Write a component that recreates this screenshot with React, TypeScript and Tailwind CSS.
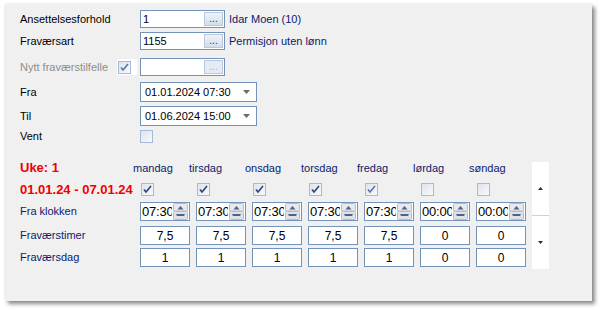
import type { ReactNode } from "react";

const font = { fontFamily: '"Liberation Sans", Arial, sans-serif' };

const days = [
  { name: "mandag", on: true, time: "07:30", hours: "7,5", day: "1" },
  { name: "tirsdag", on: true, time: "07:30", hours: "7,5", day: "1" },
  { name: "onsdag", on: true, time: "07:30", hours: "7,5", day: "1" },
  { name: "torsdag", on: true, time: "07:30", hours: "7,5", day: "1" },
  { name: "fredag", on: true, time: "07:30", hours: "7,5", day: "1" },
  { name: "lørdag", on: false, time: "00:00", hours: "0", day: "0" },
  { name: "søndag", on: false, time: "00:00", hours: "0", day: "0" },
];

function Check({ checked, dim }: { checked: boolean; dim?: boolean }) {
  return (
    <div className="flex h-[13px] w-[13px] items-center justify-center border border-[#a6bbd8] bg-gradient-to-br from-[#dfe4ec] to-[#f8f9fb]">
      {checked && (
        <svg width="9" height="9" viewBox="0 0 9 9">
          <path
            d="M1 4.5 L3 7 L8 1"
            fill="none"
            stroke={dim ? "#5a76a8" : "#2b4577"}
            strokeWidth="1.6"
          />
        </svg>
      )}
    </div>
  );
}

function LookupBox({ value, disabled }: { value: string; disabled?: boolean }) {
  return (
    <div className="flex h-[18px] w-[85px] items-stretch border border-[#7394b8] bg-white">
      <div className="flex-1 pl-[2px] leading-[16px]">{value}</div>
      <div
        className={`my-[1px] mr-[1px] flex w-[19px] items-end justify-center border border-[#b9c8da] pb-[2px] text-[10px] leading-[8px] ${
          disabled ? "bg-[#e4ebf3] text-[#a8b4c4]" : "bg-gradient-to-b from-[#eef3f9] to-[#d3deeb] text-[#333]"
        }`}
      >
        ...
      </div>
    </div>
  );
}

function DateBox({ value }: { value: string }) {
  return (
    <div className="flex h-[20px] w-[117px] items-center border border-[#7394b8] bg-white pl-[4px]">
      <span className="flex-1">{value}</span>
      <svg width="7" height="4" viewBox="0 0 7 4" className="mr-[6px]">
        <path d="M0 0 H7 L3.5 4 Z" fill="#6b6b6b" />
      </svg>
    </div>
  );
}

function Spin({ value }: { value: string }) {
  return (
    <div className="flex h-[19px] w-[50px] items-stretch border border-[#7394b8] bg-white">
      <div className="w-[31px] overflow-hidden whitespace-nowrap pl-[1px] text-[13px] leading-[17px] tracking-[-0.2px]">
        {value}
      </div>
      <svg width="15" height="17" viewBox="0 0 15 17" className="ml-auto mr-[1px]">
        <rect x="0.5" y="0.5" width="14" height="7.5" rx="1" fill="#e7e9ec" stroke="#b7bcc4" />
        <rect x="0.5" y="8.5" width="14" height="8" rx="1" fill="#dfe2e6" stroke="#b7bcc4" />
        <path d="M7.5 3 L10.5 6.5 H4.5 Z" fill="#4e6188" />
        <path d="M3 11 H12 L11 13 H4 Z" fill="#4e6188" />
      </svg>
    </div>
  );
}

function NumBox({ value }: { value: string }) {
  return (
    <div className="flex h-[19px] w-[50px] items-center justify-center border border-[#7394b8] bg-white text-[12px]">
      {value}
    </div>
  );
}

function Row({ label, children, className }: { label: ReactNode; children: ReactNode; className?: string }) {
  return (
    <div className={`flex items-center ${className ?? ""}`}>
      <div className="w-[120px] whitespace-nowrap">{label}</div>
      {children}
    </div>
  );
}

function DayRow({ label, className, render }: { label: ReactNode; className?: string; render: (d: (typeof days)[number]) => ReactNode }) {
  return (
    <div className={`flex items-center ${className ?? ""}`}>
      <div className="w-[120px] whitespace-nowrap">{label}</div>
      {days.map((d) => (
        <div key={d.name} className="w-[56px]">
          {render(d)}
        </div>
      ))}
    </div>
  );
}

export default function App() {
  return (
    <div className="h-[310px] w-[600px] overflow-hidden bg-white pl-[5px] pt-[4px] text-[11px] text-black" style={font}>
      <div className="h-[297px] w-[587px] bg-[#f0f0f0] pl-[15px] pt-[6px] shadow-[3px_3px_4px_rgba(0,0,0,0.45),0_0_2px_rgba(0,0,0,0.12)]">
        <Row label="Ansettelsesforhold">
          <LookupBox value="1" />
          <span className="ml-[4px] text-[#0c1a6e]">Idar Moen (10)</span>
        </Row>
        <Row label="Fraværsart" className="mt-[4px]">
          <LookupBox value="1155" />
          <span className="ml-[4px] text-[#0c1a6e]">Permisjon uten lønn</span>
        </Row>
        <div className="mt-[8px] flex items-center">
          <div className="w-[97px] whitespace-nowrap text-[#8d8d8d]">Nytt fraværstilfelle</div>
          <div className="flex h-[16px] w-[20px] items-center bg-white pl-[1px]">
            <Check checked dim />
          </div>
          <div className="ml-[3px]">
            <LookupBox value="" disabled />
          </div>
        </div>
        <Row label="Fra" className="mt-[6px]">
          <DateBox value="01.01.2024 07:30" />
        </Row>
        <Row label="Til" className="mt-[4px]">
          <DateBox value="01.06.2024 15:00" />
        </Row>
        <Row label="Vent" className="mt-[4px] h-[13px]">
          <Check checked={false} />
        </Row>

        <div className="mt-[17px] flex">
          <div className="text-[#0c1a6e]">
            <DayRow
              className="h-[16px]"
              label={<span className="text-[13px] font-bold text-[#f00000]">Uke: 1</span>}
              render={(d) => <span className="-ml-[7px]">{d.name}</span>}
            />
            <DayRow
              className="mt-[7px] h-[13px]"
              label={<span className="text-[13px] font-bold text-[#f00000]">01.01.24 - 07.01.24</span>}
              render={(d) => (
                <div className="pl-[1px]">
                  <Check checked={d.on} dim={d.name === "fredag"} />
                </div>
              )}
            />
            <DayRow
              className="mt-[6px]"
              label="Fra klokken"
              render={(d) => (
                <div className="text-black">
                  <Spin value={d.time} />
                </div>
              )}
            />
            <DayRow
              className="mt-[5px]"
              label="Fraværstimer"
              render={(d) => (
                <div className="text-black">
                  <NumBox value={d.hours} />
                </div>
              )}
            />
            <DayRow
              className="mt-[3px]"
              label="Fraværsdag"
              render={(d) => (
                <div className="text-black">
                  <NumBox value={d.day} />
                </div>
              )}
            />
          </div>
          <div className="mt-[2px] flex h-[107px] w-[17px] flex-col bg-white">
            <div className="flex flex-1 items-center justify-center border-b border-[#c9d3e0]">
              <svg width="5" height="3" viewBox="0 0 5 3">
                <path d="M2.5 0 L5 3 H0 Z" fill="#1f2d5a" />
              </svg>
            </div>
            <div className="flex flex-1 items-center justify-center">
              <svg width="5" height="3" viewBox="0 0 5 3">
                <path d="M0 0 H5 L2.5 3 Z" fill="#1f2d5a" />
              </svg>
            </div>
          </div>
        </div>
      </div>
    </div>
  );
}
